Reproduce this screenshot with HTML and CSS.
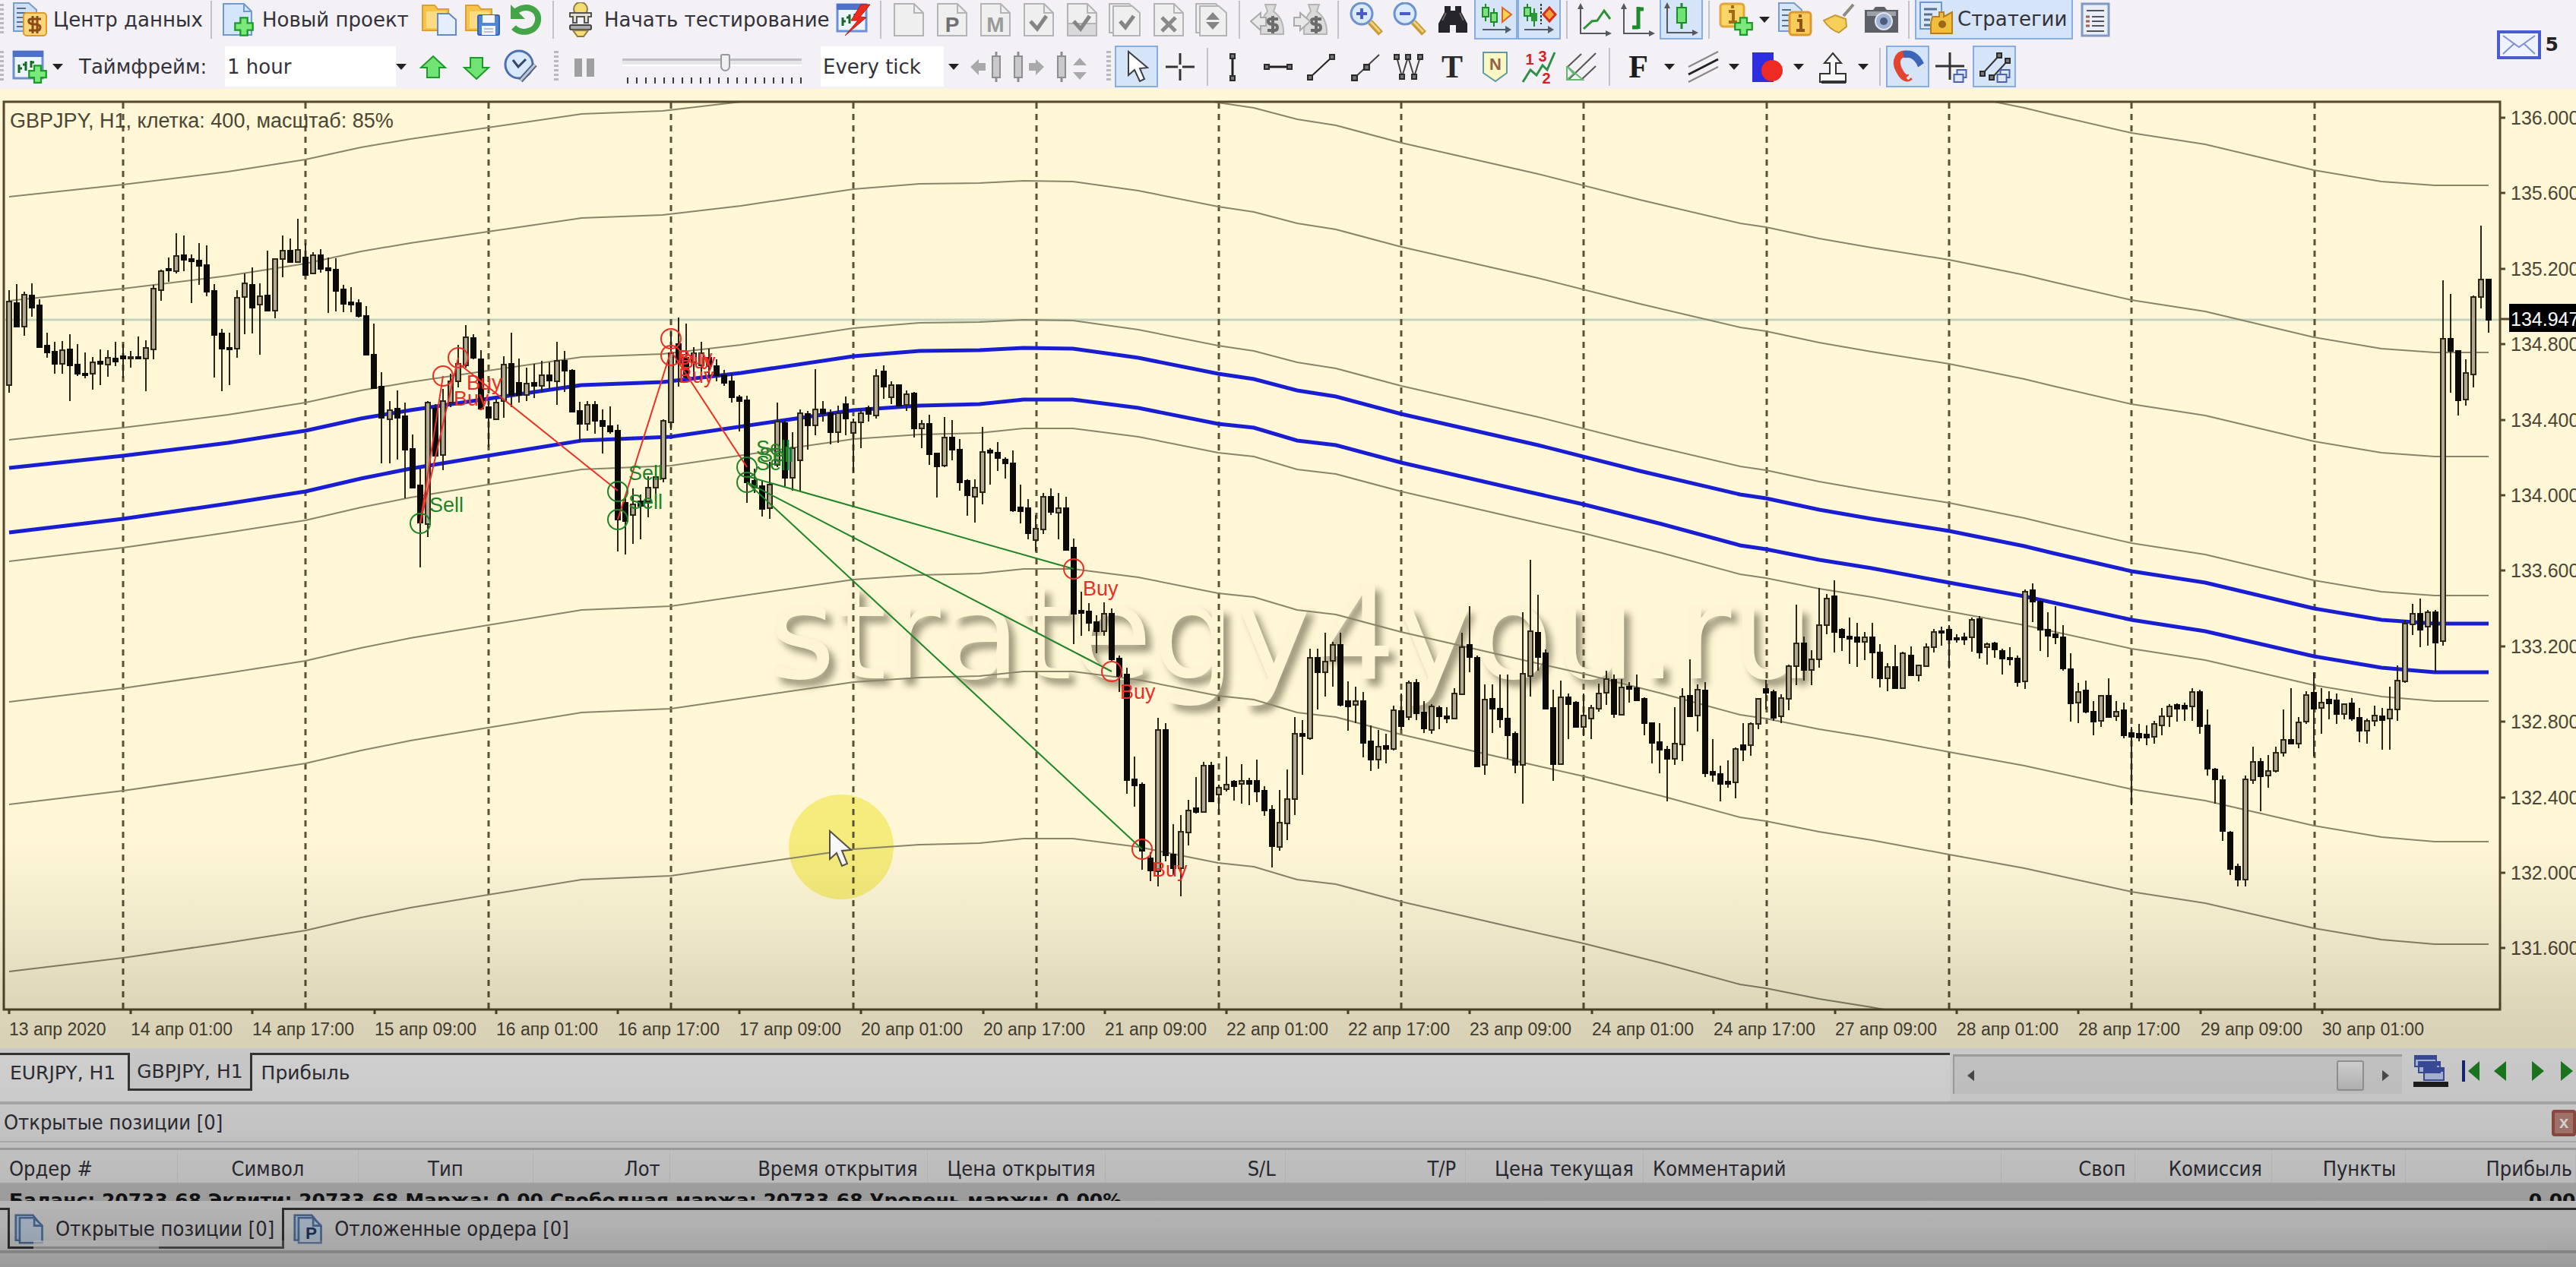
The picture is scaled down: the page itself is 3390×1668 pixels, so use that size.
FILE: index.html
```html
<!DOCTYPE html>
<html lang="ru">
<head>
<meta charset="utf-8">
<title>Forex Tester</title>
<link rel="stylesheet" href="styles.css">
</head>
<body>
<svg class="sprite" aria-hidden="true">
  <symbol id="page" viewBox="0 0 46 46"><path d="M4 2H30L42 14V44H4Z" fill="#efeff0" stroke="#b4b4b6" stroke-width="2"/><path d="M30 2V14H42" fill="none" stroke="#b4b4b6" stroke-width="2"/></symbol>
  <symbol id="pages" viewBox="0 0 46 46"><path d="M2 2H28L36 10V40H2Z" fill="#efeff0" stroke="#b4b4b6" stroke-width="2"/><path d="M7 5H32L42 14V44H7Z" fill="#efeff0" stroke="#b4b4b6" stroke-width="2"/></symbol>
  <symbol id="plus" viewBox="0 0 24 24"><path d="M8 2h8v6h6v8h-6v6H8v-6H2V8h6Z" fill="#7ce87c" stroke="#1d9a2a" stroke-width="2"/></symbol>
  <symbol id="data" viewBox="0 0 46 46"><path d="M2 1H22L32 10V38H2Z" fill="#cfe0f6" stroke="#7a9cc8" stroke-width="2"/><path d="M6 8H18M6 14H24M6 20H16M6 26H16M6 32H16" stroke="#56708f" stroke-width="2"/><rect x="15" y="14" width="30" height="30" rx="4" fill="#fbd67c" stroke="#dd9a2a" stroke-width="2"/><path d="M38 22H25Q21 22 22 26Q23 29 30 29Q37 29 37 33Q37 37 33 37H22M27 18V41M33 18V41" fill="none" stroke="#8a4b16" stroke-width="3"/></symbol>
  <symbol id="newdoc" viewBox="0 0 46 46"><path d="M3 2H30L40 12V43H3Z" fill="#d4e6fb" stroke="#6f9ad0" stroke-width="2"/><path d="M30 2V12H40" fill="none" stroke="#6f9ad0" stroke-width="2"/><use href="#plus" x="16" y="18" width="28" height="28"/></symbol>
  <symbol id="folder" viewBox="0 0 46 46"><path d="M1 4h16l4 5h14v28H1Z" fill="#f6c44a" stroke="#df9e35" stroke-width="2"/><path d="M6 12h26v22H6Z" fill="#fbdb83"/></symbol>
  <symbol id="open" viewBox="0 0 46 46"><use href="#folder"/><path d="M21 15H36L45 23V43H21Z" fill="#e3effc" stroke="#6788c4" stroke-width="2"/></symbol>
  <symbol id="save" viewBox="0 0 46 46"><use href="#folder"/><rect x="17" y="17" width="28" height="26" rx="2" fill="#4f86d8" stroke="#3663b0" stroke-width="2"/><path d="M23 17h16v10H23ZM22 31h18v12H22Z" fill="#f1f6fd"/><path d="M25 35h12M25 39h12" stroke="#88a" stroke-width="1"/></symbol>
  <symbol id="undo" viewBox="0 0 46 46"><path d="M10 12C22 2 41 8 39 24C37 40 16 43 7 33" fill="none" stroke="#43a548" stroke-width="8"/><path d="M3 3V22H22Z" fill="#43a548"/></symbol>
  <symbol id="tester" viewBox="0 0 46 46"><circle cx="23" cy="9" r="9" fill="#f4dc74" stroke="#8a7a45" stroke-width="2"/><path d="M9 14H37V19H33V27H28V19H18V27H13V19H9Z" fill="#e6e0cc" stroke="#555" stroke-width="2"/><rect x="9" y="30" width="28" height="6" rx="2" fill="#aaa" stroke="#444" stroke-width="2"/><path d="M13 37H33L27 45H19Z" fill="#f4dc74" stroke="#8a7a45" stroke-width="2"/></symbol>
  <symbol id="chartwin" viewBox="0 0 46 46"><rect x="2" y="3" width="38" height="35" fill="#eef4fd" stroke="#6c8fd6" stroke-width="3"/><path d="M1 2H41V10H1Z" fill="#4f70c8"/><path d="M9 20V31M9 25H13M18 16V28M14 20H18M25 15V24M25 17H29" stroke="#176a22" stroke-width="3"/></symbol>
  <symbol id="quick" viewBox="0 0 46 46"><use href="#chartwin"/><path d="M45 3L33 3L20 24L29 24L12 44L40 20L32 19Z" fill="#ee2a1c" stroke="#a92018" stroke-width="1"/></symbol>
  <symbol id="addchart" viewBox="0 0 46 46"><use href="#chartwin"/><use href="#plus" x="20" y="19" width="27" height="27"/></symbol>
  <symbol id="bag" viewBox="0 0 46 46"><path d="M20 3H34L31 12Q45 22 44 42H14Q13 22 23 12Z" fill="#dadada" stroke="#b5b5b5" stroke-width="2"/><path d="M37 22H27Q23 22 24 26Q25 29 30 29Q36 29 36 33Q36 37 32 37H23M30 18V41" fill="none" stroke="#6c6c6c" stroke-width="4"/></symbol>
  <symbol id="bagout" viewBox="0 0 46 46"><use href="#bag"/><path d="M1 25L14 14V20H21V31H14V37Z" fill="#e8e8e8" stroke="#aaa" stroke-width="2"/></symbol>
  <symbol id="bagin" viewBox="0 0 46 46"><use href="#bag"/><path d="M22 25L9 14V20H1V31H9V37Z" fill="#e8e8e8" stroke="#aaa" stroke-width="2"/></symbol>
  <symbol id="lens" viewBox="0 0 46 46"><path d="M28 26L42 41" stroke="#c89b38" stroke-width="8"/><path d="M28 25L41 39" stroke="#f1d27e" stroke-width="3"/><circle cx="17" cy="15" r="14" fill="#d9ebfc" stroke="#6c92cf" stroke-width="3"/><path d="M10 15H24" stroke="#4a5cc4" stroke-width="4"/></symbol>
  <symbol id="zoomin" viewBox="0 0 46 46"><use href="#lens"/><path d="M17 8V22" stroke="#4a5cc4" stroke-width="4"/></symbol>
  <symbol id="find" viewBox="0 0 46 46"><path d="M12 5H20V11H26V5H34V13L42 28V40H27V30H19V40H4V28L12 13Z" fill="#26262a"/><path d="M9 24L14 14M32 14L37 24" stroke="#666" stroke-width="2"/></symbol>
  <symbol id="shift" viewBox="0 0 46 46"><path d="M9 3V26M20 9V33" stroke="#1d8a2b" stroke-width="2"/><rect x="5" y="8" width="8" height="12" fill="#7fe080" stroke="#1d8a2b" stroke-width="2"/><rect x="16" y="15" width="8" height="12" fill="#7fe080" stroke="#1d8a2b" stroke-width="2"/><path d="M31 8L43 17L31 27Z" fill="#f8d24c" stroke="#e0642c" stroke-width="2"/><path d="M5 37H38" stroke="#555a66" stroke-width="2"/><path d="M35 32L43 37L35 42Z" fill="#555a66"/></symbol>
  <symbol id="scroll" viewBox="0 0 46 46"><path d="M7 3V26M16 9V33" stroke="#1d8a2b" stroke-width="2"/><path d="M25 3V30" stroke="#333" stroke-width="2" stroke-dasharray="3 2"/><rect x="3" y="8" width="8" height="11" fill="#7fe080" stroke="#1d8a2b" stroke-width="2"/><rect x="12" y="15" width="8" height="11" fill="#2b9a36"/><path d="M36 8L44 17L36 26L28 17Z" fill="#f5a13c" stroke="#d8301c" stroke-width="3"/><path d="M3 37H38" stroke="#555a66" stroke-width="2"/><path d="M34 32L42 37L34 42Z" fill="#555a66"/></symbol>
  <symbol id="axes" viewBox="0 0 46 46"><path d="M4 6V41H38" fill="none" stroke="#55585f" stroke-width="2"/><path d="M0 9L4 1L8 9ZM37 37L45 41L37 45Z" fill="#55585f"/></symbol>
  <symbol id="line" viewBox="0 0 46 46"><use href="#axes"/><path d="M8 35L19 25L26 24L35 11L43 22" fill="none" stroke="#2a9435" stroke-width="3"/></symbol>
  <symbol id="bars" viewBox="0 0 46 46"><use href="#axes"/><path d="M23 6V35M15 33H23M23 9H30" stroke="#1d8a2b" stroke-width="5"/></symbol>
  <symbol id="candle" viewBox="0 0 46 46"><use href="#axes"/><path d="M23 2V36" stroke="#1d8a2b" stroke-width="3"/><rect x="17" y="8" width="12" height="20" fill="#6fe271" stroke="#1d8a2b" stroke-width="2"/></symbol>
  <symbol id="indicator" viewBox="0 0 46 46"><rect x="2" y="2" width="31" height="30" rx="4" fill="#f8d566" stroke="#e0a83a" stroke-width="3"/><path d="M13 12H19V25M13 26H24M16 6H20" fill="none" stroke="#a06a18" stroke-width="4"/><use href="#plus" x="19" y="18" width="27" height="27"/></symbol>
  <symbol id="docinfo" viewBox="0 0 46 46"><path d="M2 1H22L32 10V38H2Z" fill="#d8e6fa" stroke="#7a9cc8" stroke-width="2"/><path d="M6 10H18M6 17H16M6 24H16M6 31H16" stroke="#56708f" stroke-width="2"/><rect x="16" y="13" width="28" height="30" rx="4" fill="#f8cb5c" stroke="#dd9a2a" stroke-width="3"/><path d="M26 24H31V36M25 37H36M28 18H32" fill="none" stroke="#8d5418" stroke-width="4"/></symbol>
  <symbol id="broom" viewBox="0 0 46 46"><path d="M43 3L30 18" stroke="#8d8b80" stroke-width="4"/><path d="M19 17L33 22L34 32L24 40Q12 36 4 24Z" fill="#f5cf58" stroke="#c79a34" stroke-width="2"/></symbol>
  <symbol id="camera" viewBox="0 0 46 46"><path d="M1 10H12L15 6H27L30 10H45V40H1Z" fill="#5d6167"/><path d="M4 12H42V18H4Z" fill="#9ea2a8"/><circle cx="26" cy="25" r="11" fill="#9fb4d4" stroke="#dfe5ee" stroke-width="2"/><circle cx="26" cy="25" r="5" fill="#4c5c7c"/></symbol>
  <symbol id="strategy" viewBox="0 0 46 46"><path d="M2 1H30V36H2Z" fill="#dbe8fa" stroke="#6d97ce" stroke-width="2"/><path d="M7 10H24M7 17H18M7 24H15M7 31H15" stroke="#56708f" stroke-width="3"/><path d="M18 20H27V14H33V20L44 14V42H16V28Z" fill="#f0bd3c" stroke="#b97f1e" stroke-width="2"/><circle cx="31" cy="30" r="5" fill="#9c661a"/></symbol>
  <symbol id="list" viewBox="0 0 46 46"><rect x="6" y="2" width="35" height="42" fill="#e9eef8" stroke="#7f9ac5" stroke-width="3"/><path d="M12 11H35M19 19H35M19 25H35M19 31H35M12 38H35" stroke="#4f545c" stroke-width="2"/><path d="M11 19H16M11 25H16M11 31H16" stroke="#a0604c" stroke-width="3"/></symbol>
  <symbol id="up" viewBox="0 0 46 46"><path d="M23 9L39 24H31V37H15V24H7Z" fill="#70e374" stroke="#1d9a2a" stroke-width="2"/></symbol>
  <symbol id="down" viewBox="0 0 46 46"><path d="M23 39L39 24H31V11H15V24H7Z" fill="#70e374" stroke="#1d9a2a" stroke-width="2"/></symbol>
  <symbol id="clock" viewBox="0 0 46 46"><circle cx="22" cy="20" r="18" fill="#d9e9fb" stroke="#4c6faf" stroke-width="3"/><path d="M14 14L21 23L31 13" fill="none" stroke="#36466a" stroke-width="3"/><path d="M43 20L24 41" stroke="#55627c" stroke-width="7"/><path d="M43 20L24 41" stroke="#bcc8dc" stroke-width="3"/></symbol>
  <symbol id="pause" viewBox="0 0 46 46"><path d="M10 12H20V36H10ZM26 12H36V36H26Z" fill="#9f9fa2"/></symbol>
  <symbol id="candlegray" viewBox="0 0 14 46"><path d="M7 3V43" stroke="#8e8e90" stroke-width="3"/><rect x="2" y="9" width="10" height="28" fill="#c9c9cb" stroke="#8e8e90" stroke-width="2"/></symbol>
  <symbol id="back" viewBox="0 0 46 46"><use href="#candlegray" x="30" y="0" width="14" height="46"/><path d="M3 23L14 13V18H23V28H14V34Z" fill="#a9a9ab"/></symbol>
  <symbol id="forward" viewBox="0 0 46 46"><use href="#candlegray" x="2" y="0" width="14" height="46"/><path d="M43 23L32 13V18H23V28H32V34Z" fill="#a9a9ab"/></symbol>
  <symbol id="step" viewBox="0 0 46 46"><use href="#candlegray" x="2" y="0" width="14" height="46"/><path d="M33 11L42 21H24ZM33 40L42 30H24Z" fill="#a9a9ab"/></symbol>
  <symbol id="arrow" viewBox="0 0 46 46"><path d="M12 3V34L20 27L27 42L33 39L27 25L37 24Z" fill="#fff" stroke="#3d4048" stroke-width="2"/></symbol>
  <symbol id="cross" viewBox="0 0 46 46"><path d="M23 5V41M4 23H42" stroke="#333" stroke-width="3"/><rect x="20" y="20" width="6" height="6" fill="#f3f1f5"/></symbol>
  <symbol id="node" viewBox="0 0 8 8"><rect x="1" y="1" width="6" height="6" fill="#777" stroke="#2b2b2b" stroke-width="2"/></symbol>
  <symbol id="vline" viewBox="0 0 46 46"><path d="M19 8V38" stroke="#222" stroke-width="3"/><use href="#node" x="15" y="5" width="8" height="8"/><use href="#node" x="15" y="34" width="8" height="8"/></symbol>
  <symbol id="hline" viewBox="0 0 46 46"><path d="M8 23H38" stroke="#222" stroke-width="3"/><use href="#node" x="3" y="19" width="8" height="8"/><use href="#node" x="33" y="19" width="8" height="8"/></symbol>
  <symbol id="trend" viewBox="0 0 46 46"><path d="M7 37L37 9" stroke="#222" stroke-width="2"/><use href="#node" x="3" y="33" width="8" height="8"/><use href="#node" x="32" y="6" width="8" height="8"/></symbol>
  <symbol id="ray" viewBox="0 0 46 46"><path d="M8 38L41 7" stroke="#444" stroke-width="2"/><use href="#node" x="4" y="33" width="9" height="9"/><use href="#node" x="20" y="19" width="9" height="9"/></symbol>
  <symbol id="wave" viewBox="0 0 46 46"><path d="M7 10L14 36L22 10L30 36L38 10" fill="none" stroke="#444" stroke-width="2"/><use href="#node" x="3" y="6" width="8" height="8"/><use href="#node" x="18" y="6" width="8" height="8"/><use href="#node" x="34" y="6" width="8" height="8"/><use href="#node" x="10" y="32" width="8" height="8"/><use href="#node" x="26" y="32" width="8" height="8"/></symbol>
  <symbol id="note" viewBox="0 0 46 46"><path d="M7 4H38V31L23 42L7 31Z" fill="#fbf8c4" stroke="#5f9aa0" stroke-width="2"/></symbol>
  <symbol id="elliott" viewBox="0 0 46 46"><path d="M2 43L12 27L20 34L28 21L34 27L44 4" fill="none" stroke="#2f8f4a" stroke-width="3"/></symbol>
  <symbol id="fork" viewBox="0 0 46 46"><path d="M3 24L22 6M5 40L41 5M22 40L41 22" stroke="#555" stroke-width="2"/><path d="M3 22V40H24L3 22L12 32L3 40" fill="none" stroke="#69b573" stroke-width="2"/></symbol>
  <symbol id="channel" viewBox="0 0 46 46"><path d="M3 23L42 3M3 43L42 23" stroke="#888" stroke-width="2"/><path d="M3 33L42 13" stroke="#222" stroke-width="3"/></symbol>
  <symbol id="shape" viewBox="0 0 46 46"><path d="M2 4H30V43H2Z" fill="#2c2ee0"/><circle cx="28" cy="28" r="14" fill="#ee2a24"/></symbol>
  <symbol id="export" viewBox="0 0 46 46"><path d="M23 5L34 18H27V32H40V43H6V32H19V18H12Z" fill="#fafafa" stroke="#333" stroke-width="2"/><path d="M8 43H40" stroke="#333" stroke-width="4"/></symbol>
  <symbol id="magnet" viewBox="0 0 46 46"><path d="M24 7C10 2 5 16 11 27C15 35 20 41 26 36" fill="none" stroke="#e24430" stroke-width="9"/><path d="M17 7C30 3 38 14 41 24" fill="none" stroke="#3d66b8" stroke-width="9"/><path d="M22 39L30 31M36 26L45 20" stroke="#dfe3ec" stroke-width="4"/></symbol>
  <symbol id="tag" viewBox="0 0 20 20"><path d="M6 2H18V12H6Z" fill="#dfe6f8" stroke="#4a62b4" stroke-width="2"/><path d="M2 8H14V18H2Z" fill="#dfe6f8" stroke="#4a62b4" stroke-width="2"/></symbol>
  <symbol id="crosstag" viewBox="0 0 46 46"><path d="M21 4V40M2 22H40" stroke="#333" stroke-width="3"/><use href="#tag" x="24" y="25" width="21" height="20"/></symbol>
  <symbol id="trendtag" viewBox="0 0 46 46"><path d="M7 32L29 8M19 38L40 15" stroke="#333" stroke-width="2"/><use href="#node" x="3" y="28" width="8" height="8"/><use href="#node" x="25" y="4" width="8" height="8"/><use href="#node" x="36" y="11" width="8" height="8"/><use href="#node" x="15" y="33" width="8" height="8"/><use href="#tag" x="24" y="25" width="21" height="20"/></symbol>
  <symbol id="copyblue" viewBox="0 0 46 46"><path d="M2 2H28L36 12V40H2Z" fill="#c4d8f2" stroke="#5880b4" stroke-width="3"/><path d="M8 6H30L42 18V44H8Z" fill="#d6e6fa" stroke="#5880b4" stroke-width="3"/><path d="M30 6V18H42" fill="none" stroke="#5880b4" stroke-width="3"/></symbol>
</svg>

<div class="app">
  <header class="header">
    <div class="toolbars">
      <div class="toolbar toolbar-top">
        <span class="grip grip-first"></span>
        <button class="tool labelled center"><svg class="ico"><use href="#data"/></svg>Центр данных</button>
        <span class="sep"></span>
        <button class="tool labelled project"><svg class="ico"><use href="#newdoc"/></svg>Новый проект</button>
        <button class="tool" aria-label="Открыть"><svg class="ico"><use href="#open"/></svg></button>
        <button class="tool" aria-label="Сохранить"><svg class="ico"><use href="#save"/></svg></button>
        <button class="tool" aria-label="Обновить"><svg class="ico"><use href="#undo"/></svg></button>
        <span class="sep"></span>
        <button class="tool labelled testing"><svg class="ico"><use href="#tester"/></svg>Начать тестирование</button>
        <button class="tool" aria-label="Быстрый тест"><svg class="ico"><use href="#quick"/></svg></button>
        <span class="sep"></span>
        <button class="tool" aria-label="Ордер"><svg class="ico"><use href="#page"/></svg></button>
        <button class="tool" aria-label="Отложенный ордер"><svg class="ico" viewBox="0 0 46 46"><use href="#page"/><text x="23" y="39" text-anchor="middle" class="glyph" font-size="28" fill="#707070">P</text></svg></button>
        <button class="tool" aria-label="Изменить"><svg class="ico" viewBox="0 0 46 46"><use href="#page"/><text x="23" y="39" text-anchor="middle" class="glyph" font-size="28" fill="#9a9a9a">M</text></svg></button>
        <button class="tool" aria-label="Закрыть"><svg class="ico" viewBox="0 0 46 46"><use href="#page"/><path d="M12 25L21 35L33 18" fill="none" stroke="#858585" stroke-width="5"/></svg></button>
        <button class="tool" aria-label="Закрыть часть"><svg class="ico" viewBox="0 0 46 46"><use href="#page"/><path d="M4 28H42V44H4Z" fill="#d9d9db" stroke="#b4b4b6" stroke-width="2"/><path d="M12 25L21 35L33 18" fill="none" stroke="#858585" stroke-width="5"/></svg></button>
        <button class="tool" aria-label="Закрыть все"><svg class="ico" viewBox="0 0 46 46"><use href="#pages"/><path d="M16 25L23 33L34 18" fill="none" stroke="#858585" stroke-width="5"/></svg></button>
        <button class="tool" aria-label="Удалить"><svg class="ico" viewBox="0 0 46 46"><use href="#page"/><path d="M14 20L32 38M32 20L14 38" stroke="#8a8a8a" stroke-width="5"/></svg></button>
        <button class="tool" aria-label="Стоп и профит"><svg class="ico" viewBox="0 0 46 46"><use href="#pages"/><path d="M24 13L33 23H15ZM24 36L33 26H15Z" fill="#858585"/></svg></button>
        <span class="sep"></span>
        <button class="tool" aria-label="Снять"><svg class="ico"><use href="#bagout"/></svg></button>
        <button class="tool" aria-label="Внести"><svg class="ico"><use href="#bagin"/></svg></button>
        <span class="sep"></span>
        <button class="tool" aria-label="Увеличить"><svg class="ico"><use href="#zoomin"/></svg></button>
        <button class="tool" aria-label="Уменьшить"><svg class="ico"><use href="#lens"/></svg></button>
        <button class="tool" aria-label="Найти"><svg class="ico"><use href="#find"/></svg></button>
        <button class="tool on" aria-label="Сдвиг" aria-pressed="true"><svg class="ico"><use href="#shift"/></svg></button>
        <button class="tool on" aria-label="Автопрокрутка" aria-pressed="true"><svg class="ico"><use href="#scroll"/></svg></button>
        <span class="sep"></span>
        <button class="tool" aria-label="Линия"><svg class="ico"><use href="#line"/></svg></button>
        <button class="tool" aria-label="Бары"><svg class="ico"><use href="#bars"/></svg></button>
        <button class="tool on" aria-label="Свечи" aria-pressed="true"><svg class="ico"><use href="#candle"/></svg></button>
        <span class="sep"></span>
        <button class="tool split" aria-label="Индикатор"><svg class="ico"><use href="#indicator"/></svg><span class="caret"></span></button>
        <button class="tool" aria-label="Список индикаторов"><svg class="ico"><use href="#docinfo"/></svg></button>
        <button class="tool" aria-label="Очистить"><svg class="ico"><use href="#broom"/></svg></button>
        <button class="tool" aria-label="Снимок"><svg class="ico"><use href="#camera"/></svg></button>
        <span class="sep"></span>
        <button class="tool labelled strategies on" aria-pressed="true"><svg class="ico"><use href="#strategy"/></svg>Стратегии</button>
        <button class="tool" aria-label="Список"><svg class="ico"><use href="#list"/></svg></button>
      </div>
      <div class="toolbar toolbar-draw">
        <span class="grip grip-first"></span>
        <button class="tool split" aria-label="Новый график"><svg class="ico"><use href="#addchart"/></svg><span class="caret"></span></button>
        <label class="field-label" for="timeframe">Таймфрейм:</label>
        <span class="picker picker-frame"><select id="timeframe"><option>1 hour</option></select></span>
        <button class="tool" aria-label="Больше"><svg class="ico"><use href="#up"/></svg></button>
        <button class="tool" aria-label="Меньше"><svg class="ico"><use href="#down"/></svg></button>
        <button class="tool" aria-label="Время"><svg class="ico"><use href="#clock"/></svg></button>
        <span class="grip"></span>
        <button class="tool" aria-label="Пауза"><svg class="ico"><use href="#pause"/></svg></button>
        <span class="speed"><input type="range" min="0" max="100" value="58" aria-label="Скорость"></span>
        <span class="picker picker-tick"><select aria-label="Тики"><option>Every tick</option></select></span>
        <button class="tool" aria-label="Назад"><svg class="ico"><use href="#back"/></svg></button>
        <button class="tool" aria-label="Вперёд"><svg class="ico"><use href="#forward"/></svg></button>
        <button class="tool" aria-label="Шаг"><svg class="ico"><use href="#step"/></svg></button>
        <span class="grip"></span>
        <button class="tool on" aria-label="Курсор" aria-pressed="true"><svg class="ico"><use href="#arrow"/></svg></button>
        <button class="tool" aria-label="Перекрестие"><svg class="ico"><use href="#cross"/></svg></button>
        <span class="sep"></span>
        <button class="tool" aria-label="Вертикаль"><svg class="ico"><use href="#vline"/></svg></button>
        <button class="tool" aria-label="Горизонталь"><svg class="ico"><use href="#hline"/></svg></button>
        <button class="tool" aria-label="Тренд"><svg class="ico"><use href="#trend"/></svg></button>
        <button class="tool" aria-label="Луч"><svg class="ico"><use href="#ray"/></svg></button>
        <button class="tool" aria-label="Волна"><svg class="ico"><use href="#wave"/></svg></button>
        <button class="tool" aria-label="Текст"><svg class="ico" viewBox="0 0 46 46"><text x="23" y="37" text-anchor="middle" class="serif" font-size="42" fill="#2a2a2a">T</text></svg></button>
        <button class="tool" aria-label="Заметка"><svg class="ico" viewBox="0 0 46 46"><use href="#note"/><text x="23" y="27" text-anchor="middle" class="glyph" font-size="22" fill="#94604a">N</text></svg></button>
        <button class="tool" aria-label="Волны Эллиотта"><svg class="ico" viewBox="0 0 46 46"><use href="#elliott"/><text x="11" y="20" text-anchor="middle" class="glyph" font-size="20" fill="#d3222a">1</text><text x="28" y="16" text-anchor="middle" class="glyph" font-size="20" fill="#d3222a">3</text><text x="33" y="45" text-anchor="middle" class="glyph" font-size="20" fill="#d3222a">2</text></svg></button>
        <button class="tool" aria-label="Вилы"><svg class="ico"><use href="#fork"/></svg></button>
        <span class="sep"></span>
        <button class="tool split wide" aria-label="Фибоначчи"><svg class="ico" viewBox="0 0 46 46"><text x="22" y="37" text-anchor="middle" class="serif" font-size="42" fill="#1c1c1c">F</text></svg><span class="caret"></span></button>
        <button class="tool split wide" aria-label="Канал"><svg class="ico"><use href="#channel"/></svg><span class="caret"></span></button>
        <button class="tool split wide" aria-label="Фигуры"><svg class="ico"><use href="#shape"/></svg><span class="caret"></span></button>
        <button class="tool split wide" aria-label="Экспорт"><svg class="ico"><use href="#export"/></svg><span class="caret"></span></button>
        <span class="sep"></span>
        <button class="tool on" aria-label="Магнит" aria-pressed="true"><svg class="ico"><use href="#magnet"/></svg></button>
        <button class="tool" aria-label="Метка курсора"><svg class="ico"><use href="#crosstag"/></svg></button>
        <button class="tool on" aria-label="Метка линии" aria-pressed="true"><svg class="ico"><use href="#trendtag"/></svg></button>
      </div>
    </div>
    <a class="mail" href="#mail"><svg viewBox="0 0 58 38"><rect x="2" y="2" width="54" height="34" fill="#eef3ff" stroke="#4a5cd0" stroke-width="4"/><path d="M8 7L29 22L50 7M8 31L22 18M50 31L36 18" fill="none" stroke="#7f8fd8" stroke-width="2"/></svg>5</a>
  </header>

  <main>
    <svg class="chart" id="chart" viewBox="0 117 3390 1263" role="img" aria-label="GBPJPY, H1">
      <defs><clipPath id="plot"><rect x="6" y="135" width="3283" height="1193"/></clipPath></defs>
      <text class="watermark" x="1010" y="893">strategy4you.ru</text>
      <circle cx="1107" cy="1115" r="69" fill="#f6ec7c"/>
      <path d="M6 421H3289" stroke="#c3d3bd" stroke-width="3"/>
      <g id="grid" class="grid"></g>
      <g id="bands" clip-path="url(#plot)"></g>
      <g id="candles"></g>
      <g id="trades" class="trades"></g>
      <rect class="frame" x="5" y="134" width="3285" height="1195"/>
      <text class="caption" x="13" y="168">GBPJPY, H1, клетка: 400, масштаб: 85%</text>
      <g id="times" class="times"></g>
      <g id="prices" class="prices"></g>
      <path d="M1092 1094V1131L1101 1123L1108 1140L1115 1137L1108 1120L1120 1119Z" fill="#fafafa" stroke="#54504a" stroke-width="2"/>
    </svg>

    <div class="sheetbar">
      <nav class="sheets">
        <button class="sheet">EURJPY, H1</button><button class="sheet current">GBPJPY, H1</button><button class="sheet">Прибыль</button>
        <span class="sheets-rest"></span>
      </nav>
      <div class="scroller">
        <button aria-label="Влево"><svg viewBox="0 0 10 16"><path d="M10 0V16L0 8Z"/></svg></button>
        <span class="track"><span class="thumb"></span></span>
        <button aria-label="Вправо"><svg viewBox="0 0 10 16"><path d="M0 0V16L10 8Z"/></svg></button>
      </div>
      <div class="windows">
        <button aria-label="Окна"><svg width="46" height="44" viewBox="0 0 46 44"><path d="M2 2H30V16H2ZM7 10H35V24H7ZM14 18H40V34H14Z" fill="#c3d2f5" stroke="#4257b0" stroke-width="2"/><path d="M2 3H30V7H2ZM7 11H35V15H7ZM14 19H40V23H14Z" fill="#4257b0"/><path d="M0 36H46V43H0Z" fill="#222"/></svg></button>
        <button aria-label="В начало"><svg width="24" height="30" viewBox="0 0 24 30"><path d="M0 1H4V29H0Z" fill="#1c2c84"/><path d="M23 2V28L8 15Z" fill="#1f8a22"/></svg></button>
        <button aria-label="Назад"><svg width="16" height="30" viewBox="0 0 16 30"><path d="M16 2V28L0 15Z" fill="#1f8a22"/></svg></button>
        <button aria-label="Вперёд"><svg width="16" height="30" viewBox="0 0 16 30"><path d="M0 2V28L16 15Z" fill="#1f8a22"/></svg></button>
        <button aria-label="В конец"><svg width="16" height="30" viewBox="0 0 16 30"><path d="M0 2V28L16 15Z" fill="#1f8a22"/></svg></button>
      </div>
    </div>

    <section class="panel">
      <div class="panel-head"><h2>Открытые позиции [0]</h2><button class="close" aria-label="Закрыть панель">x</button></div>
      <div class="table-box">
        <table>
          <thead><tr><th>Ордер #</th><th class="mid">Символ</th><th class="mid">Тип</th><th class="num">Лот</th><th class="num">Время открытия</th><th class="num">Цена открытия</th><th class="num">S/L</th><th class="num">T/P</th><th class="num">Цена текущая</th><th>Комментарий</th><th class="num">Своп</th><th class="num">Комиссия</th><th class="num">Пункты</th><th class="num last">Прибыль</th></tr></thead>
          <tbody><tr><td colspan="13">Баланс: 20733.68 Эквити: 20733.68 Маржа: 0.00 Свободная маржа: 20733.68 Уровень маржи: 0.00%</td><td class="num last">0.00</td></tr></tbody>
        </table>
      </div>
      <div class="tabs">
        <button class="tab current"><svg class="tab-ico"><use href="#copyblue"/></svg>Открытые позиции [0]</button>
        <button class="tab"><svg class="tab-ico" viewBox="0 0 46 46"><use href="#copyblue"/><text x="27" y="38" text-anchor="middle" class="glyph" font-size="26" fill="#26406c">P</text></svg>Отложенные ордера [0]</button>
        <div class="playback"><span></span></div>
      </div>
    </section>
  </main>
</div>
<script src="chart.js"></script>
</body>
</html>
```
FILE: styles.css
```css
* { box-sizing: border-box; }
html, body { margin: 0; }
body { background: #f3f1f5; font: 27px/32px "DejaVu Sans Condensed", "DejaVu Sans", sans-serif; color: #33323a; }
button, select, input { font: inherit; color: inherit; }
button { background: none; border: 0; padding: 0; margin: 0; }
.sprite { display: none; }
.glyph { font-family: "Liberation Sans", sans-serif; font-weight: bold; }
.serif { font-family: "Liberation Serif", serif; font-weight: bold; }

.app { position: relative; overflow: hidden; min-height: 100vh; display: flex; flex-direction: column; background: #f0f0f0; }
.app::after { content: ""; position: absolute; inset: 0; pointer-events: none;
  background: linear-gradient(rgba(0,0,0,0) 66%, rgba(0,0,0,.05) 72%, rgba(0,0,0,.14) 80%, rgba(0,0,0,.18) 88%, rgba(0,0,0,.22) 93%, rgba(0,0,0,.27) 97%, rgba(0,0,0,.36) 100%); }

/* toolbars */
.header { display: flex; justify-content: space-between; height: 117px; background: #f3f1f5; font-family: "DejaVu Sans", sans-serif; font-size: 26px; }
.toolbar { display: flex; align-items: center; white-space: nowrap; }
.toolbar-top { height: 52px; }
.toolbar-draw { height: 55px; margin-top: 8px; }
.tool { flex: none; width: 57px; height: 52px; display: flex; align-items: center; justify-content: center; border: 2px solid transparent; }
.toolbar-draw .tool { height: 55px; }
.tool.on { background: #d5e4f7; border-color: #86aee0; }
.toolbar-top .tool.on { border-top: 0; }
.ico { flex: none; width: 46px; height: 46px; }
.labelled { justify-content: flex-start; gap: 8px; padding-left: 3px; }
.center { width: 259px; }
.project { width: 263px; }
.testing { width: 358px; }
.strategies { width: 208px; background: #dfe7f3; gap: 5px; }
.sep { flex: none; width: 2px; height: 50px; margin: 0 7px; background: #c4c2c8; }
.grip { flex: none; width: 6px; height: 42px; margin: 0 5px 0 17px; background: repeating-linear-gradient(#b9b8bf 0 3px, transparent 3px 6px); }
.grip-first { margin: 0 6px 0 0; width: 5px; }
.split { width: 76px; gap: 7px; }
.split.wide { width: 85px; gap: 10px; }
.caret { border: 7px solid transparent; border-top: 8px solid #222; border-bottom: 0; }
.field-label { width: 209px; padding-left: 17px; }
.picker { position: relative; height: 53px; background: linear-gradient(90deg, #fff 92%, #f3f1f5 92%); }
.picker::after { content: ""; position: absolute; right: 6px; top: 23px; border: 7px solid transparent; border-top: 8px solid #222; border-bottom: 0; pointer-events: none; }
.picker-frame { width: 245px; }
.picker-tick { width: 188px; background: linear-gradient(90deg, #fff 86%, #f3f1f5 86%); }
select { width: 100%; height: 100%; appearance: none; border: 0; background: none; padding: 0 3px; }
.speed { width: 236px; height: 44px; margin: 0 25px 0 22px; padding-top: 4px; background: repeating-linear-gradient(90deg, transparent 0 6px, #3a3a3e 6px 8px, transparent 8px 12px) 0 100% / 100% 8px no-repeat; }
.speed input { display: block; appearance: none; width: 100%; height: 24px; margin: 0; background: none; }
.speed input::-webkit-slider-runnable-track { height: 10px; background: #e6e5e9; border-top: 3px solid #c0bfc4; border-bottom: 2px solid #fff; }
.speed input::-webkit-slider-thumb { appearance: none; width: 13px; height: 23px; margin-top: -9px; background: #f0f0f2; border: 2px solid #98979d; border-radius: 3px 3px 7px 7px; }
.mail { display: flex; align-items: center; gap: 6px; padding-right: 23px; color: #222; font-size: 25px; font-weight: bold; text-decoration: none; }
.mail svg { width: 58px; height: 38px; }

/* chart */
.chart { display: block; width: 100%; height: auto; background: #fff7d6; }
.chart text { font-family: "Liberation Sans", sans-serif; }
.chart .watermark { font-family: "DejaVu Sans", sans-serif; font-size: 172px; fill: #fdf5d4; text-shadow: 8px 9px 10px rgba(80, 74, 50, .55); }
.caption { font-size: 27px; fill: #4b4535; }
.grid { fill: none; stroke: #5c5335; stroke-width: 3; stroke-dasharray: 8 7; }
.frame { fill: none; stroke: #55492a; stroke-width: 3; }
.band { fill: none; stroke: #8a8468; stroke-width: 2; }
.band.main { stroke: #1a1ed2; stroke-width: 5; }
.times text { font-size: 23px; fill: #4b4535; }
.prices text { font-size: 25px; fill: #4b4535; }
.prices .now { fill: #fff; }
.tick { fill: none; stroke: #55492a; stroke-width: 3; }
.wick { stroke: #2b2618; stroke-width: 2; }
.fall { fill: #0b0a07; stroke: #0b0a07; stroke-width: 2; }
.rise { fill: #b0a891; stroke: #2b2618; stroke-width: 2; }
.trades { fill: none; stroke-width: 2; }
.trades text { font-size: 27px; stroke: none; }
.buy { stroke: #ea2f26; }
.sell { stroke: #1f8327; }
.trades text.buy { fill: #ea2f26; }
.trades text.sell { fill: #1f8327; }

/* sheet tabs under the chart */
.sheetbar { display: flex; height: 70px; padding-top: 6px; background: #eee; }
.sheets { flex: 1; display: flex; background: #f5f5f5; }
.sheet { padding: 0 12px; border-top: 3px solid #3c3c3c; height: 50px; font-family: "DejaVu Sans", sans-serif; font-size: 25px; white-space: nowrap; }
.sheet:first-child { padding: 0 16px 0 13px; }
.sheet.current { border: 3px solid #3c3c3c; border-top: 0; background: #ececec; padding: 3px 9px 0; }
.sheets-rest { flex: 1; border-top: 3px solid #3c3c3c; }
.scroller { width: 591px; height: 52px; margin: 2px 0 0 4px; display: flex; align-items: center; justify-content: space-between; padding: 0 17px; border-top: 3px solid #b8b8b8; border-left: 2px solid #b8b8b8; background: #e4e4e4; }
.scroller button { display: flex; }
.scroller svg { width: 9px; height: 16px; fill: #555; }
.track { flex: 1; height: 40px; display: flex; justify-content: flex-end; margin: 0 24px; }
.thumb { width: 36px; border: 2px solid #a9a9a9; background: linear-gradient(#f4f4f4, #d2d2d2); border-radius: 3px; }
.windows { width: 229px; flex: none; display: flex; align-items: flex-start; padding: 2px 0 0 15px; }
.windows button { flex: none; height: 44px; display: flex; align-items: center; margin-right: 18px; }
.windows button:nth-child(3) { margin-right: 34px; }
.windows button:nth-child(4) { margin-right: 22px; }

/* positions panel */
.panel { flex: 1; background: #f0f0f0; }
.panel-head { display: flex; align-items: center; justify-content: space-between; height: 54px; border-top: 4px solid #c6c6c6; border-bottom: 2px solid #d2d2d2; padding-left: 5px; }
.panel-head h2 { margin: 0; font-size: 27px; font-weight: normal; }
.close { width: 32px; height: 35px; border: 4px solid #a8584c; border-radius: 4px; background: #c48a80; color: #fff; font: bold 22px/22px "Liberation Sans", sans-serif; }
.table-box { height: 70px; margin-top: 7px; overflow: hidden; border-top: 3px solid #bdbdbd; }
table { width: 100%; table-layout: fixed; border-collapse: collapse; }
th, td { padding: 0 12px; text-align: left; white-space: nowrap; }
th { height: 44px; font-weight: normal; font-size: 27px; padding-top: 6px; border-bottom: 2px solid #cfcfcf; border-right: 1px solid #e2e2e2; }
td { height: 36px; padding-top: 7px; font-family: "DejaVu Sans", sans-serif; font-size: 25px; line-height: 29px; font-weight: bold; background: #cccccc; color: #17171a; }
.mid { text-align: center; }
.num { text-align: right; }
.last { padding-right: 4px; }
td.last { padding-right: 0; }
th:nth-child(1) { width: 6.9%; }
th:nth-child(2) { width: 7%; }
th:nth-child(3) { width: 6.8%; }
th:nth-child(4) { width: 5.3%; }
th:nth-child(5) { width: 10%; }
th:nth-child(6) { width: 6.9%; }
th:nth-child(7) { width: 7%; }
th:nth-child(8) { width: 7%; }
th:nth-child(9) { width: 6.9%; }
th:nth-child(10) { width: 13.9%; }
th:nth-child(11) { width: 5.2%; }
th:nth-child(12) { width: 5.3%; }
th:nth-child(13) { width: 5.2%; }
.tabs { position: relative; display: flex; height: 69px; padding: 9px 0 7px 10px; border-bottom: 4px solid #c2c2c2;
  background: linear-gradient(#3a3a3a, #3a3a3a) 0 9px / 100% 3px no-repeat; }
.tab { display: flex; align-items: center; gap: 14px; height: 54px; padding: 2px 12px 0; white-space: nowrap; }
.tab.current { background: #efefef; border: 3px solid #3a3a3a; border-top: 0; padding: 4px 10px 0 6px; }
.tab-ico { width: 40px; height: 40px; }
.playback { position: absolute; left: 44px; right: 38px; bottom: 1px; height: 12px; background: rgba(255, 255, 255, .2); }
.playback span { display: block; width: 5%; height: 100%; background: rgba(255, 255, 255, .6); }
```
FILE: chart.js
```js
const NS = 'http://www.w3.org/2000/svg';
const FIRST = 12, STEP = 10.01;

function add(parent, tag, attrs, text) {
  const el = document.createElementNS(NS, tag);
  for (const key in attrs) el.setAttribute(key, attrs[key]);
  if (text) el.textContent = text;
  document.getElementById(parent).appendChild(el);
}

// Each block: vertical origin, units per pixel, candles as high,open/close top,bottom,low + w (rise) or b (fall)
const blocks = [
  [180, 2.529, `512,550,828,853w 490,555,632,632b 515,525,632,662w 488,528,568,600b 540,562,700,700b 652,695,718,737b 683,715,757,788b 680,710,757,790w 657,708,762,880b 690,758,790,797b 718,788,795,805b 733,750,788,842w 708,748,756,826b 710,735,758,800w 683,738,748,765b 690,732,738,803b 712,733,738,770w 665,733,738,742b 678,703,738,848w 492,507,708,742w 442,448,510,545w 402,440,446,482b 322,397,448,455w 328,395,410,448b 393,406,414,553b 355,413,430,492b 362,427,517,532b 490,513,660,802b 640,655,706,848b 652,703,709,828b 512,535,706,735w 455,487,533,657w 435,493,568,655b 488,530,560,727w 380,528,580,580b 405,408,578,605w 330,380,406,468w 340,380,418,418b 272,376,418,420w 355,402,460,462b 385,394,455,455w 375,395,440,452b 402,437,444,587b 405,443,513,582b 493,508,556,585b 500,552,558,585b 542,555,597,602b 563,597,725,725b 622,725,837,840b 785,833,935,1088b 880,910,940,1088w 845,905,935,1075b 885,930,1043,1205b 992,1040,1168,1170b 1105,1160,1285,1435b 880,885,1290,1333w 890,905,1062,1062b 840,880,1060,1110w 790,815,885,900w 692,755,815,835w 627,668,760,770w 658,670,735,740b 710,740,905,905b 880,900,935,1035b 872,885,940,942w 730,758,880,935w 652,755,860,900b 738,820,860,885b 768,822,860,880w 755,820,830,870b 745,795,830,852w 750,795,812,840b 683,747,815,892w 713,745,780,850b 775,780,915,917b 883,912,955,1013b 880,893,955,978w 880,893,947,990b 908,947,963,1055b 898,963,980,988b 958,978,1275,1380b 1200,1220,1280,1392b 1170,1225,1260,1355w 1190,1215,1230,1340b 1130,1168,1215,1268w 1095,1133,1168,1215w 940,945,1137,1150w 650,720,952,975w 602,690,750,832b 622,735,800,808b 700,720,750,800w 683,722,760,800w 705,735,765,800b 740,765,795,815b 777,795,820,830b 790,815,868,885b 860,868,880,980b 862,878,1150,1220b`],
  [500, 2.178, `255,290,310,325b 290,305,370,392b 235,300,368,398w 66,120,245,250w 115,125,282,305b 150,195,282,318w 85,95,230,320w 90,97,130,200b -30,85,130,158w 60,85,95,120b 85,95,150,185b 75,95,150,180w 48,70,110,160b 110,122,152,265w 85,95,122,195w 75,80,98,120b -30,-10,102,110w -42,-25,20,55b 5,15,50,70w 12,15,75,80b 30,42,72,90w 35,40,140,165b 115,127,140,195w 100,127,213,243b 210,212,248,338b 107,165,247,250w 115,165,200,230b 170,200,293,317b 285,290,332,390b 285,310,335,410w 135,207,322,357w 195,202,208,300b 178,208,225,262b 222,228,240,283b 202,240,375,380b 300,366,376,412b 342,367,440,457b 388,427,460,492w 325,335,430,442w 312,335,378,388b 325,368,382,457w 335,367,487,487b 455,482,670,757b 608,662,668,735b 640,665,697,720b 675,695,722,783b 638,670,722,735w 655,670,802,805b 790,800,850,895b 825,845,1148,1187b 1080,1145,1162,1225b 1155,1160,1350,1405b 1355,1372,1408,1437b 970,1003,1410,1452w 985,1003,1363,1380b 1275,1362,1400,1420b 1248,1295,1400,1480w 1205,1235,1297,1335w 1140,1228,1240,1243b 1095,1107,1240,1242w 1095,1107,1208,1210b 1160,1170,1190,1245w 1080,1160,1175,1180w 1148,1152,1165,1207b 1102,1150,1158,1215w 1142,1150,1158,1220b 1090,1150,1180,1210b 1165,1178,1235,1250b 1220,1232,1338,1398b 1177,1270,1340,1350w 1117,1203,1272,1320w 968,1015,1203,1247w 975,1015,1022,1132b 772,797,1028,1032w 770,798,838,945b 725,808,838,908w 752,760,805,880w 725,760,932,937b 865,922,936,1007b 880,922,932,985w 895,922,1040,1082b 990,1037,1088,1122b 1003,1053,1088,1115w 1015,1050,1058,1100b 935,948,1058,1063w 900,950,993,1005b 862,868,968,975w 858,870,957,975b 922,955,1000,1012b 930,937,1003,1015w 935,940,965,1002b`],
  [620, 3, `933,970,978,995b 857,880,978,982w 638,695,883,885w 535,688,735,795b 730,738,1168,1170b 842,903,1162,1200w 843,900,940,1035b 805,940,982,1013b 805,977,1043,1138b 1030,1038,1160,1193b 557,800,1160,1313w 352,632,810,892w 488,638,735,788b 705,720,940,943b 863,935,1158,1223b 828,895,1157,1160w 878,895,922,1058b 910,915,1012,1012b 880,967,1010,1048w 925,935,977,1058w 840,880,940,950w 788,823,875,923w 803,825,960,975b 822,855,963,967w 833,852,860,915b 803,857,907,907b 895,900,997,1043b 992,997,1073,1155b 995,1072,1102,1193b 1087,1100,1138,1305b 933,1078,1138,1162w 857,890,1080,1147w 743,888,970,973b 843,865,965,1028w 833,867,1193,1208b 1058,1188,1200,1227b 1163,1197,1235,1305b 1143,1228,1235,1250b 1092,1097,1230,1292w 997,1083,1102,1147b 993,1000,1083,1125w 898,900,1000,1020w 825,860,875,943b 865,872,975,988b 883,897,970,997w 765,770,900,945w 527,682,770,845w 655,682,787,828b 708,745,787,845w 463,610,745,778w 485,503,610,645w 432,495,637,718b 622,627,657,710b 578,655,662,763b 600,657,675,773b 635,658,675,748w 600,657,717,818b 685,717,818,855b 758,775,818,870w 687,775,857,860b 715,720,857,860w 693,730,808,810b 765,768,808,832w 680,697,772,775w 625,635,697,718w 615,632,638,690b 610,627,667,780b 645,660,667,678b 640,657,665,688b 580,587,658,715w 572,585,718,740b 678,683,697,765w 675,680,705,737b 703,710,740,803b 697,737,743,768b 730,740,833,853b 467,478,832,862w 445,472,517,597b 510,517,627,712b 558,627,650,735b 535,645,657,683b 608,657,780,788b 720,782,917,990b 838,873,915,997w 828,867,950,957b 910,950,990,1043b 885,887,987,1012w 820,887,972,975b 910,950,970,987w 915,945,1045,1057b`],
  [0, 1.17, `1120,1129,1135,1240b 1115,1130,1136,1142b 1117,1131,1136,1148b 1110,1115,1135,1145w 1090,1103,1117,1132w 1085,1088,1103,1120w 1084,1086,1092,1112b 1082,1087,1092,1110b 1060,1066,1088,1110w 1062,1066,1118,1130b 1093,1117,1184,1195b 1183,1185,1200,1238b 1195,1202,1280,1295b 1280,1282,1338,1348b 1330,1335,1355,1365b 1195,1200,1355,1365w 1150,1174,1202,1207w 1168,1174,1196,1250b 1163,1187,1194,1213w 1150,1160,1187,1190w 1093,1140,1160,1165w 1060,1139,1146,1147b 1105,1113,1145,1153w 1065,1070,1112,1115w 1035,1067,1092,1165b 1060,1082,1090,1130w 1065,1077,1083,1108b 1068,1079,1100,1115b 1083,1085,1100,1108w 1075,1083,1107,1110b 1090,1106,1126,1143b 1107,1110,1126,1145w 1087,1102,1110,1118w 1090,1103,1109,1155b 1058,1093,1107,1155w 1025,1048,1093,1110w 955,960,1050,1052w 930,945,962,978w 922,945,970,997b 940,943,965,995w 940,943,990,1035b 432,522,987,995w 453,522,540,605b 540,540,617,640b 553,575,615,625w 455,458,577,597w 348,430,458,475w 430,430,493,513b`]
];

let n = 0;
for (const [top, scale, list] of blocks) {
  for (const item of list.split(' ')) {
    const [high, head, foot, low] = item.slice(0, -1).split(',').map(v => Math.round(top + v / scale));
    const x = Math.round(FIRST + n++ * STEP);
    add('candles', 'path', { class: 'wick', d: `M${x} ${high}V${low}` });
    add('candles', 'rect', { class: item.endsWith('w') ? 'rise' : 'fall', x: x - 3, y: head, width: 6, height: Math.max(foot - head, 2) });
  }
}

// Moving-average channel and its envelopes
const upper = [[12,616],[162,600],[300,583],[402,567],[475,551],[540,540],[642,525],[765,507],[872,503],[975,491],[1123,469],[1210,462],[1289,461],[1347,458],[1412,459],[1498,471],[1603,492],[1650,499],[1707,514],[1758,522],[1844,545],[2024,586],[2158,620],[2290,651],[2324,656],[2394,671],[2463,683],[2565,699],[2664,719],[2701,728],[2805,752],[2902,767],[3045,801],[3134,816],[3204,821],[3275,821]];
const lower = [[12,701],[162,683],[300,663],[402,647],[475,630],[540,617],[642,600],[765,580],[883,575],[1123,540],[1210,534],[1289,532],[1347,526],[1412,526],[1498,537],[1603,558],[1650,563],[1707,580],[1758,586],[1844,609],[2009,647],[2084,664],[2187,690],[2290,718],[2324,723],[2394,737],[2463,748],[2565,767],[2664,785],[2805,816],[2902,831],[3045,864],[3134,879],[3204,885],[3275,885]];
const band = (points, shift, cls) => add('bands', 'path', { class: cls, d: 'M' + points.map(([x, y]) => `${x} ${y + shift}`).join('L') });
[-577, -357, -220, -37].forEach(s => band(upper, s, 'band'));
[38, 223, 358, 578].forEach(s => band(lower, s, 'band'));
band(upper, 0, 'band main');
band(lower, 0, 'band main');

for (let i = 0; i < 13; i++) {
  const x = Math.round(162 + i * 240.3);
  add('grid', 'path', { d: `M${x} 135V1328` });
}

['13 апр 2020', '14 апр 01:00', '14 апр 17:00', '15 апр 09:00', '16 апр 01:00', '16 апр 17:00', '17 апр 09:00', '20 апр 01:00', '20 апр 17:00', '21 апр 09:00', '22 апр 01:00', '22 апр 17:00', '23 апр 09:00', '24 апр 01:00', '24 апр 17:00', '27 апр 09:00', '28 апр 01:00', '28 апр 17:00', '29 апр 09:00', '30 апр 01:00'].forEach((label, i) => {
  const x = Math.round(12 + i * 160.2);
  add('times', 'path', { class: 'tick', d: `M${x} 1329V1335` });
  add('times', 'text', { x, y: 1363 }, label);
});

for (let i = 0; i < 12; i++) {
  const y = Math.round(155 + i * 99.4);
  add('prices', 'path', { class: 'tick', d: `M3290 ${y}H3297` });
  add('prices', 'text', { x: 3304, y: y + 9 }, (136 - i * 0.4).toFixed(3));
}
add('prices', 'rect', { x: 3302, y: 400, width: 88, height: 37, fill: '#000' });
add('prices', 'path', { class: 'tick', d: 'M3290 420H3302' });
add('prices', 'text', { class: 'now', x: 3304, y: 429 }, '134.947');

// Trade links, entry circles and captions
[['buy', 553, 689, 583, 495], ['buy', 553, 689, 603, 471], ['buy', 603, 478, 813, 646], ['buy', 813, 684, 883, 462], ['buy', 883, 462, 983, 615], ['sell', 983, 627, 1413, 749], ['sell', 983, 635, 1463, 884], ['sell', 983, 635, 1503, 1118]]
  .forEach(([cls, a, b, c, d]) => add('trades', 'path', { class: cls, d: `M${a} ${b}L${c} ${d}` }));
[['sell', 553, 689], ['buy', 583, 495], ['buy', 603, 471], ['sell', 813, 647], ['sell', 813, 684], ['buy', 883, 446], ['buy', 883, 468], ['sell', 983, 615], ['sell', 983, 635], ['buy', 1413, 749], ['buy', 1463, 884], ['buy', 1503, 1118]]
  .forEach(([cls, cx, cy]) => add('trades', 'circle', { class: cls, cx, cy, r: 13 }));
[['Sell', 565, 674], ['Buy', 614, 513], ['Buy', 597, 534], ['Sell', 827, 632], ['Sell', 827, 670], ['Buy', 891, 480], ['Buy', 895, 485], ['Buy', 893, 504], ['Sell', 995, 599], ['Sell', 999, 608], ['Sell', 995, 619], ['Buy', 1425, 784], ['Buy', 1474, 920], ['Buy', 1516, 1154]]
  .forEach(([label, x, y]) => add('trades', 'text', { class: label.toLowerCase(), x, y }, label));
```
